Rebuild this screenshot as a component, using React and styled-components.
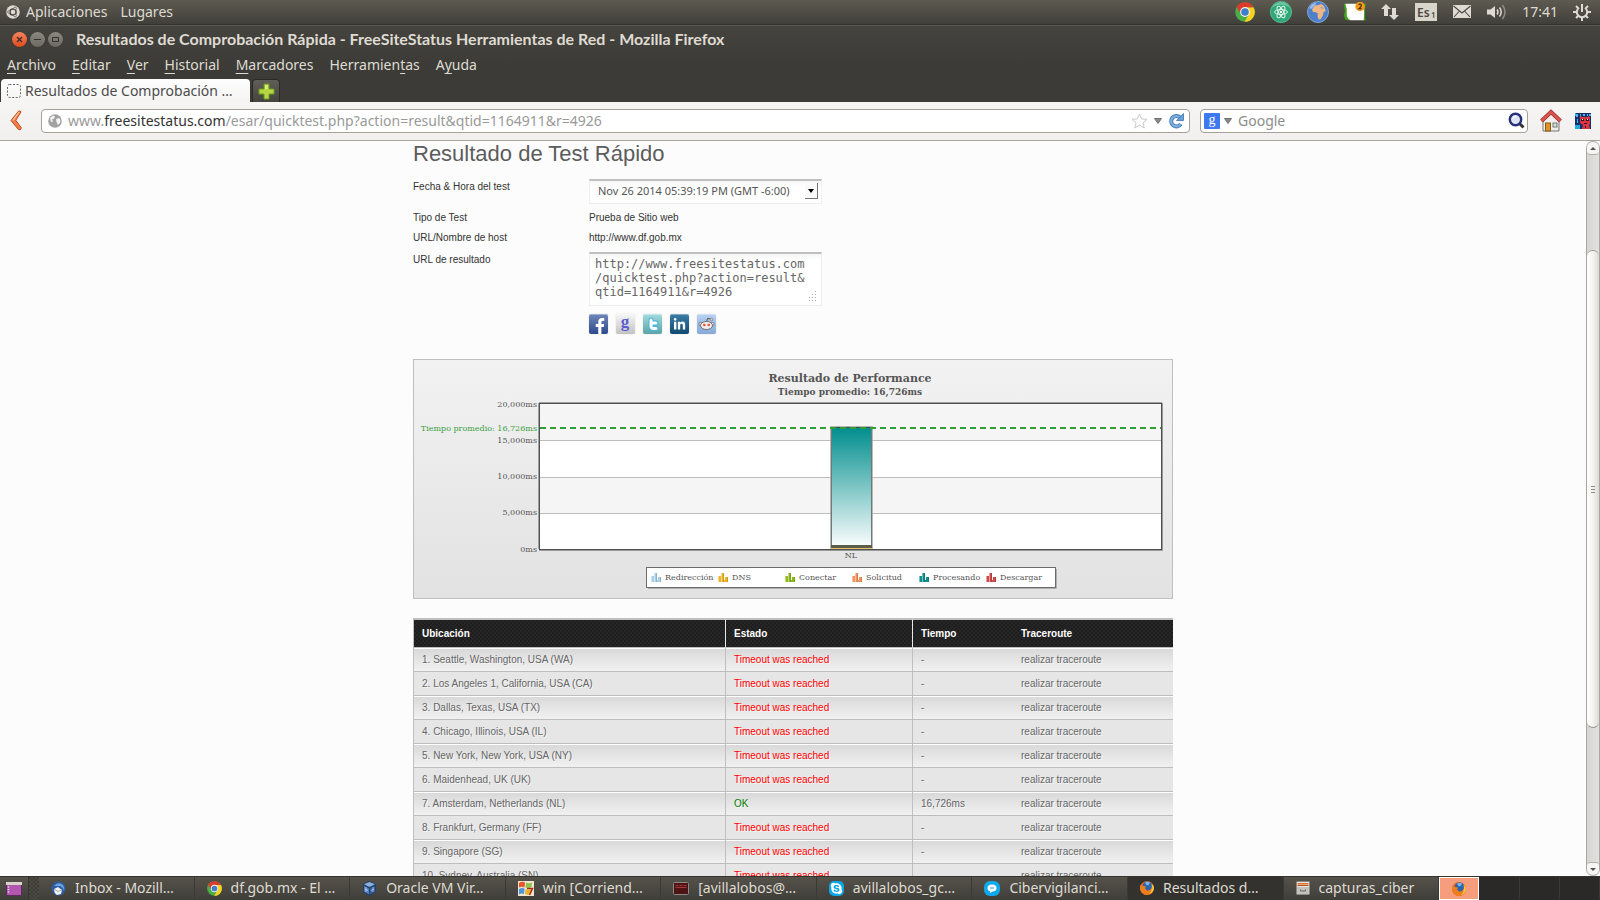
import React from "react";
import styled, { createGlobalStyle, css } from "styled-components";
import { FaFacebookF, FaLinkedinIn, FaSkype } from "react-icons/fa";

const UI = `"Noto Sans", "Open Sans", sans-serif`;
const BODY = `"Liberation Sans", Arial, sans-serif`;

const Global = createGlobalStyle`
  *, *::before, *::after { box-sizing: border-box; }
  body { margin: 0; background: #fcfcfc; font-family: ${BODY}; }
  button, input, select, textarea { font: inherit; color: inherit; margin: 0; }
  button { border: 0; padding: 0; background: none; cursor: pointer; }
  svg { display: block; flex: none; }
`;

const Desktop = styled.div`
  height: 100vh;
  display: flex;
  flex-direction: column;
  overflow: hidden;
`;

/* ---------- top panel ---------- */

const Panel = styled.header`
  height: 25px;
  flex: none;
  display: flex;
  align-items: center;
  justify-content: space-between;
  padding: 0 9px 1px 6px;
  background: linear-gradient(#5d5a51, #413f3a);
  border-bottom: 1px solid #343330;
  color: #dfdbd2;
  font: 14px/20px ${UI};
`;
const PanelGroup = styled.div`
  display: flex;
  align-items: center;
  gap: ${(p) => p.$gap}px;
`;
const PanelButton = styled.button`
  display: flex;
  align-items: center;
  gap: 6px;
`;

/* ---------- browser chrome ---------- */

const Chrome = styled.div`
  flex: none;
  background: linear-gradient(#45433e, #3c3b37 40px);
  border-top: 1px solid #5a5852;
  color: #dfdbd2;
  font: 14px/20px ${UI};
`;
const TitleBar = styled.div`
  height: 26px;
  display: flex;
  align-items: center;
  padding-left: 12px;
`;
const WindowButtons = styled.div`
  display: flex;
  gap: 3px;
  margin-right: 13px;
`;
const WindowButton = styled.button`
  width: 15px;
  height: 15px;
  border-radius: 50%;
  display: grid;
  place-items: center;
  background: ${(p) => (p.$close ? "linear-gradient(#f58560, #df4a1b)" : "linear-gradient(#8b887f, #6b6962)")};
  box-shadow: 0 0 1px #22211e;
  color: #33302c;
`;
const Title = styled.h1`
  margin: 0;
  font: bold 16px/20px Lato, ${UI};
`;
const Menu = styled.nav`
  height: 26px;
  display: flex;
  align-items: center;
  gap: 16px;
  padding-left: 7px;
  u { text-underline-offset: 3px; }
`;
const TabStrip = styled.div`
  height: 24px;
  display: flex;
  align-items: flex-end;
  gap: 2px;
  padding-left: 1px;
`;
const Tab = styled.button`
  width: 249px;
  height: 23px;
  display: flex;
  align-items: center;
  gap: 4px;
  padding-left: 6px;
  border-radius: 4px 4px 0 0;
  background: linear-gradient(#fdfdfd, #f5f4f3);
  color: #4c4c4c;
  white-space: nowrap;
`;
const NewTab = styled.button`
  width: 28px;
  height: 23px;
  display: grid;
  place-items: center;
  border: 1px solid #2b2a27;
  border-bottom: 0;
  border-radius: 4px 4px 0 0;
  background: linear-gradient(#605e57, #45433e);
`;

const NavBar = styled.div`
  flex: none;
  height: 39px;
  display: flex;
  align-items: center;
  padding: 0 9px 1px 10px;
  background: linear-gradient(#f6f5f4, #f1f0ef);
  border-bottom: 1px solid #aaa69d;
  color: #8c8c8c;
  font: 14px/20px ${UI};
`;
const Field = styled.div`
  height: 24px;
  display: flex;
  align-items: center;
  gap: 6px;
  border: 1px solid #a5a198;
  border-radius: 4px;
  background: #fff;
`;
const Address = styled(Field)`
  flex: 1;
  margin: 0 10px 0 19px;
  padding: 0 5px 0 6px;
`;
const AddressText = styled.div`
  flex: 1;
  white-space: nowrap;
  overflow: hidden;
  color: #999;
  b { font-weight: 400; color: #333; }
`;
const Search = styled(Field)`
  width: 328px;
  gap: 4px;
  padding: 0 2px 0 3px;
  margin-right: 12px;
`;
const SearchInput = styled.input`
  flex: 1;
  min-width: 0;
  border: 0;
  outline: 0;
  padding: 0 0 0 2px;
  background: none;
  &::placeholder { color: #8c8c8c; opacity: 1; }
`;
const Extras = styled.div`
  display: flex;
  align-items: center;
  gap: 13px;
`;

/* ---------- page ---------- */

const Viewport = styled.div`
  flex: 1;
  min-height: 0;
  display: flex;
`;
const Page = styled.main`
  flex: 1;
  min-width: 0;
  overflow: hidden;
  background: #fcfcfc;
`;
const Content = styled.div`
  max-width: 760px;
  margin: 0 auto;
`;
const Heading = styled.h2`
  margin: 0 0 12px;
  color: #5c5c5c;
  font: 22px/26px ${BODY};
`;
const Form = styled.form`
  display: grid;
  row-gap: 8px;
  color: #333;
  font: 10px/12px ${BODY};
`;
const FormRow = styled.div`
  display: grid;
  grid-template-columns: 176px 233px;
  align-items: start;
`;
const FormLabel = styled.label`
  padding-top: ${(p) => (p.$control ? 2 : 0)}px;
`;
const controlBox = css`
  display: block;
  width: 100%;
  border: 1px solid #eee;
  border-top: 2px solid #bfbfbf;
  border-radius: 0;
  background: linear-gradient(#f6f6f6, #fff 6px);
`;
const SelectWrap = styled.div`
  position: relative;
`;
const Select = styled.select`
  ${controlBox}
  appearance: none;
  height: 25px;
  padding: 0 24px 2px 8px;
  color: #555;
  font: 11px/16px ${UI};
`;
const SelectArrow = styled.span`
  position: absolute;
  right: 4px;
  top: 4px;
  width: 13px;
  height: 16px;
  display: grid;
  place-items: center;
  border-right: 1px solid #777;
  border-bottom: 1px solid #777;
  background: #fafafa;
  pointer-events: none;
`;
const Area = styled.textarea`
  ${controlBox}
  height: 54px;
  padding: 3px 5px;
  resize: none;
  overflow: hidden;
  color: #666;
  font: 12px/14px "DejaVu Sans Mono", monospace;
`;
const Grip = styled.svg`
  position: absolute;
  right: 5px;
  bottom: 5px;
`;
const Social = styled.div`
  grid-column: 2;
  display: flex;
  gap: 8px;
`;
const SocialLink = styled.a`
  width: 19px;
  height: 20px;
  display: grid;
  place-items: ${(p) => p.$place || "center"};
  border-radius: 2px;
  background: linear-gradient(${(p) => p.$from}, ${(p) => p.$to});
  box-shadow: inset 0 1px 0 rgba(255, 255, 255, 0.35), 0 0 1px rgba(0, 0, 0, 0.35);
  color: #fff;
  text-decoration: none;
`;

const ChartCard = styled.figure`
  margin: 25px 0 19px;
  height: 240px;
  border: 1px solid #bfbfbf;
  background: linear-gradient(#f2f2f2, #e2e2e2);
`;
const ChartSvg = styled.svg`
  width: 100%;
  height: 100%;
`;
const ChartText = styled.text`
  font: ${(p) => (p.$bold ? 700 : 400)} ${(p) => p.$size || 8}px "DejaVu Serif", serif;
  fill: ${(p) => p.$ink || "#555"};
`;

const Table = styled.table`
  width: 100%;
  table-layout: fixed;
  border-spacing: 0;
  border-left: 1px solid #bfbfbf;
  font: 10px/14px ${BODY};
  color: #666;
`;
const Col = styled.col`
  width: ${(p) => (p.$w ? `${p.$w}px` : "auto")};
`;
const HeadCell = styled.th`
  height: 30px;
  padding: 0 8px;
  text-align: left;
  color: #fff;
  border-top: 2px solid #bfbfbf;
  border-bottom: 1px solid #bfbfbf;
  border-right: ${(p) => (p.$rule ? "1px solid #e8e8e8" : "0")};
  background: repeating-conic-gradient(#1e1e1e 0 25%, #262626 0 50%) 0 0 / 4px 4px;
`;
const Row = styled.tr`
  background: ${(p) => (p.$odd ? "linear-gradient(#fff 1px, #d9d9d9 1px, #f2f2f2)" : "#e6e6e6")};
`;
const Cell = styled.td`
  height: 24px;
  padding: 0 8px;
  border-bottom: 1px solid #bdbdbd;
  border-right: ${(p) => (p.$rule ? "1px solid #bfbfbf" : "0")};
  color: ${(p) => p.$ink || "inherit"};
  text-shadow: 1px 1px 0 rgba(255, 255, 255, 0.6);
  white-space: nowrap;
`;
const TraceLink = styled.a`
  color: inherit;
  text-decoration: none;
`;

/* ---------- scrollbar ---------- */

const Scrollbar = styled.div`
  width: 14px;
  flex: none;
  display: flex;
  flex-direction: column;
  border: 1px solid #a9a7a2;
  border-top: 0;
  border-bottom: 0;
  border-radius: 7px;
  background: linear-gradient(90deg, #d6d5d2, #e2e1df);
`;
const ScrollButton = styled.button`
  height: 14px;
  flex: none;
  display: grid;
  place-items: center;
  border: 1px solid #b0aea9;
  border-width: 1px 0;
  border-radius: ${(p) => (p.$end ? "4px 4px 7px 7px" : "7px 7px 4px 4px")};
  background: #f6f5f4;
`;
const Track = styled.div`
  flex: 1;
  display: grid;
  grid-template-rows: 95fr 480fr 134fr;
`;
const Thumb = styled.div`
  grid-row: 2;
  display: grid;
  place-items: center;
  border: 1px solid #98958f;
  border-width: 1px 0;
  border-radius: 6px;
  background: linear-gradient(90deg, #fff, #f4f3f1 50%, #dcdad6);
`;

/* ---------- bottom task bar ---------- */

const TaskBar = styled.footer`
  flex: none;
  height: 24px;
  display: flex;
  background: linear-gradient(#55524a, #403e39);
  border-top: 1px solid #34332f;
  color: #dfdbd2;
  font: 14px/20px ${UI};
`;
const ShowDesktop = styled.button`
  width: 29px;
  display: grid;
  place-items: center;
  border-right: 1px solid #36352f;
`;
const Handle = styled.div`
  width: 10px;
  background: repeating-conic-gradient(#4b4942 0 25%, #3f3d38 0 50%) 0 0 / 4px 4px;
`;
const Tasks = styled.div`
  flex: 1;
  min-width: 0;
  display: flex;
`;
const Task = styled.button`
  flex: 1 1 0;
  min-width: 0;
  display: flex;
  align-items: center;
  gap: 9px;
  padding: 0 0 1px 12px;
  border-right: 1px solid #3b3934;
  background: ${(p) => (p.$active ? "#33322e" : "none")};
  white-space: nowrap;
`;
const Workspaces = styled.div`
  width: 161px;
  display: grid;
  grid-template-columns: repeat(4, 1fr);
  background: #2a2927;
`;
const Workspace = styled.button`
  display: grid;
  place-items: center;
  border: 1px solid ${(p) => (p.$active ? "#fff" : "transparent")};
  border-right-color: ${(p) => (p.$active ? "#fff" : "#3a3936")};
  background: ${(p) => (p.$active ? "#f59d7c" : "none")};
`;

/* ---------- icons ---------- */

const UbuntuIcon = () => (
  <svg width="14" height="14" viewBox="0 0 14 14">
    <circle cx="7" cy="7" r="6.8" fill="#dfdbd2" />
    <circle cx="7" cy="7" r="3.1" fill="none" stroke="#4b4943" strokeWidth="1.5" />
    <g fill="#dfdbd2" stroke="#4b4943" strokeWidth=".7">
      <circle cx="2.9" cy="7" r="1.3" />
      <circle cx="9.1" cy="3.4" r="1.3" />
      <circle cx="9.1" cy="10.6" r="1.3" />
    </g>
  </svg>
);
const ChromeIcon = ({ size }) => (
  <svg width={size} height={size} viewBox="0 0 20 20">
    <circle cx="10" cy="10" r="9.8" fill="#4aae48" />
    <path d="M1.5 5.1A9.8 9.8 0 0 1 18.6 5.4H10L6.1 12.2z" fill="#dc3a2b" />
    <path d="M18.6 5.4A9.8 9.8 0 0 1 9.6 19.8L14 12.2 14 7.8 10 5.4z" fill="#fcd01e" />
    <circle cx="10" cy="10" r="4.9" fill="#f4f4f0" />
    <circle cx="10" cy="10" r="3.8" fill="#3f7fc9" />
  </svg>
);
const AtomIcon = () => (
  <svg width="22" height="22" viewBox="0 0 22 22">
    <circle cx="11" cy="11" r="10.6" fill="#2fa877" stroke="#62c49c" strokeWidth=".8" />
    <path d="M2 7a10 10 0 0 1 18 0 14 14 0 0 0-18 0z" fill="#8cd4b5" opacity=".7" />
    <g fill="none" stroke="#e4f5ec" strokeWidth="1">
      <ellipse cx="11" cy="11" rx="6.4" ry="2.5" />
      <ellipse cx="11" cy="11" rx="6.4" ry="2.5" transform="rotate(60 11 11)" />
      <ellipse cx="11" cy="11" rx="6.4" ry="2.5" transform="rotate(120 11 11)" />
    </g>
    <circle cx="11" cy="11" r="1.3" fill="#e4f5ec" />
  </svg>
);
const EarthIcon = () => (
  <svg width="22" height="22" viewBox="0 0 22 22">
    <circle cx="11" cy="11" r="10.5" fill="#4d7fcb" stroke="#85a6d8" />
    <path d="M2.5 7a9.6 9.6 0 0 1 7-5.400L8 4.500 4 8z" fill="#9dbce8" />
    <path d="M6 7 8 4.500l3.500-.5 2.500-1 3 2 1 3 .8 2-2.300 1.200-.6 3.400-2.400 3.600-2 .4-1-3.600.4-2.400-2.200-1.400-2.700-.2-1-2.400z" fill="#f0b783" />
    <path d="M12.500 5.500l4 1.500-1.500 1z" fill="#7b9bc9" />
  </svg>
);
const NotifyIcon = () => (
  <svg width="22" height="20" viewBox="0 0 24 20">
    <path d="M0 1h3l1 12 3 6H4l-3-1-1-5 1-3zM24 1h-3v12l-2 6h5l-1-2V5z" fill="#43a51c" />
    <path d="M1.500 1h20q.5 3 0 6l.500 3-.5 9H7q-4-2-4-7 .5-6-1.500-11z" fill="#fff" />
    <circle cx="17.500" cy="4" r="5.200" fill="#f79a10" />
    <path d="M16 2.200q1.500-1.600 2.800-.3 1 1.400-2.700 4.600h3.200" fill="none" stroke="#222" strokeWidth="1.200" />
  </svg>
);
const NetworkIcon = () => (
  <svg width="19" height="16" viewBox="0 0 19 16" fill="#dfdbd2">
    <path d="M5 0l5 5H7v7H3V5H0z" />
    <path d="M13 16l5-5h-3V4h-4v7H8z" />
  </svg>
);
const KeyboardIcon = () => (
  <svg width="22" height="18" viewBox="0 0 22 18">
    <rect width="22" height="18" fill="#d9d5cb" />
    <text x="2" y="14" fontFamily="Noto Sans, sans-serif" fontWeight="600" fontSize="12" fill="#4a4843">Es</text>
    <text x="16" y="15" fontFamily="Noto Sans, sans-serif" fontWeight="600" fontSize="8" fill="#4a4843">1</text>
  </svg>
);
const MailIcon = () => (
  <svg width="20" height="13" viewBox="-1 0 20 13">
    <rect width="18" height="13" fill="#dfdbd2" />
    <path d="M.5 1 9 8l8.500-7M1 12l5.500-6M17 12l-5.500-6" fill="none" stroke="#4a4843" strokeWidth="1.100" />
  </svg>
);
const VolumeIcon = () => (
  <svg width="20" height="16" viewBox="0 0 20 16">
    <path d="M0 5.500h3.500L8 2v12l-4.500-3.500H0z" fill="#dfdbd2" />
    <g fill="none" strokeWidth="1.500" stroke="#dfdbd2">
      <path d="M10 5.500q2 2.500 0 5" />
      <path d="M12.500 3.500q3.500 4.500 0 9" />
      <path d="M15.500 1q5 7 0 14" stroke="#8f8c84" />
    </g>
  </svg>
);
const PowerIcon = () => (
  <svg width="18" height="18" viewBox="0 0 18 18" fill="none" stroke="#dfdbd2" strokeWidth="2">
    <path d="M6 4.800A5.200 5.200 0 1 0 12 4.800M9 1v8" />
    <path d="M3 3l2 2M15 3l-2 2M0 9h4M18 9h-4M3 15l2-2M15 15l-2-2M9 18v-3" />
  </svg>
);
const PlusIcon = () => (
  <svg width="17" height="17" viewBox="0 0 17 17">
    <path d="M6 1h5v5h5v5h-5v5H6v-5H1V6h5z" fill="#b5d642" stroke="#6a9a20" />
    <path d="M7 2h3v4H7z" fill="#d8ec7c" />
  </svg>
);
const BackIcon = () => (
  <svg width="12" height="21" viewBox="0 0 12 21">
    <path d="M8.500 1.200Q10.500.3 11 2L5.800 10.300 11.300 17.800Q11 20.500 8.500 19.600L1 10.500z" fill="#ef8048" stroke="#c04a1c" />
    <path d="M9 2 3 10.400" stroke="#fbc79c" strokeWidth="1.200" />
  </svg>
);
const GlobeIcon = () => (
  <svg width="14" height="14" viewBox="0 0 14 14">
    <circle cx="7" cy="7" r="6.800" fill="#a2a2a2" />
    <path d="M2 4l3-2.500 2 1-1 2-2 1 1 2-2 .5zM8 5l3-1 1.500 2-.5 3-2 2-1.500-3z" fill="#f3f3f3" />
  </svg>
);
const StarIcon = () => (
  <svg width="17" height="16" viewBox="0 0 17 16">
    <path d="M8.500 1l2.200 5 5.300.3-4.100 3.500 1.400 5.200-4.800-2.900L3.700 15l1.400-5.200L1 6.300 6.300 6z" fill="#fff" stroke="#c9c9c9" />
  </svg>
);
const Caret = () => (
  <svg width="8" height="6" viewBox="0 0 8 6">
    <path d="M.5.500h7L4 5.500z" fill="#8a8a8a" stroke="#6f6f6f" />
  </svg>
);
const ReloadIcon = () => (
  <svg width="16" height="16" viewBox="0 0 16 16">
    <path d="M12 4.500A5.200 5.200 0 1 0 12.800 11" fill="none" stroke="#3d77b4" strokeWidth="4" />
    <path d="M12 4.500A5.200 5.200 0 1 0 12.800 11" fill="none" stroke="#7fb0de" strokeWidth="2.200" />
    <path d="M15.500.500v7H8.500z" fill="#6aa0d4" stroke="#3d77b4" strokeWidth=".8" />
  </svg>
);
const GoogleIcon = () => (
  <svg width="16" height="16" viewBox="0 0 16 16">
    <rect width="16" height="16" rx="1" fill="#3f79f0" />
    <text x="8" y="11" textAnchor="middle" fontFamily="Liberation Serif, serif" fontSize="14" fill="#fff">g</text>
  </svg>
);
const LensIcon = () => (
  <svg width="17" height="17" viewBox="0 0 17 17">
    <path d="M11 11l4.500 4.500" stroke="#333" strokeWidth="3" />
    <circle cx="7.500" cy="7.500" r="5.700" fill="#dfe4f5" stroke="#26307c" strokeWidth="2.400" />
    <path d="M5 6.500q1-2.500 3-2.500" stroke="#fff" strokeWidth="1.500" fill="none" />
  </svg>
);
const HomeIcon = () => (
  <svg width="22" height="23" viewBox="0 0 22 23">
    <path d="M3 10l8-7 8 7v12H3z" fill="#efeeea" stroke="#777" />
    <rect x="5.500" y="14" width="5" height="8" fill="#d9952c" stroke="#8a5a10" />
    <rect x="13" y="14" width="4" height="4" fill="#cfe0d8" stroke="#777" />
    <path d="M1.500 12 11 3l9.500 9" fill="none" stroke="#a82c2c" strokeWidth="4" />
    <path d="M1.500 12 11 3l9.500 9" fill="none" stroke="#d8544f" strokeWidth="2.600" />
  </svg>
);
const CatIcon = () => (
  <svg width="16" height="16" viewBox="0 0 16 16">
    <rect width="16" height="16" fill="#14306b" />
    <path d="M0 12h5v4H0zM0 0h1v3H0z" fill="#26a8e0" />
    <path d="M1 1h2v3H1zM5 1h1v3H5zM8 1h2v2H8zM12 1h1v2h-1zM2 6h1v4H2zM14 1h2v2h-2z" fill="#4fb4e8" />
    <path d="M5 3l2 1h5l2-1 1 2v6l-1 1 1 4H7l1-4-3-2z" fill="#dc3340" />
    <path d="M6 6h3v2H6zM11 6h3v2h-3zM9 10h3v1H9zM10 13h1v2h-1z" fill="#2b1730" />
    <path d="M7 6h1v1H7zM12 6h1v1h-1z" fill="#fff" />
  </svg>
);
const FirefoxIcon = () => (
  <svg width="14" height="14" viewBox="0 0 14 14">
    <circle cx="7" cy="7" r="6.900" fill="#e2621b" />
    <circle cx="7.500" cy="5.500" r="4.900" fill="#2d64ad" />
    <path d="M5 2q2-2 5-.5l-1 2-2 1z" fill="#7db7e8" />
    <path d="M1 3.500 3 5l3 .5-1 2 2 2q3 .5 4.500-2.500Q13 4 11.500 2.500 14.500 5 13.500 9T8 13.800 1 10.500 1 3.500z" fill="#ef7d1e" />
    <path d="M11.500 2.500Q14.500 5 13.500 9 12 12.500 9 13q4-3 2.500-10.500z" fill="#fbc93a" />
  </svg>
);
const ThunderbirdIcon = () => (
  <svg width="15" height="15" viewBox="0 0 15 15">
    <circle cx="7.500" cy="7.500" r="7" fill="#2a5da6" />
    <path d="M3 5q4-5 9-1 2 3 1 6-1-4-4-5z" fill="#6fa3dc" />
    <path d="M3 8l4-2 4 3-1 4-4 1q-3-2-3-6z" fill="#f1f1ee" />
    <path d="M3 8l4 2.500L11 9" fill="none" stroke="#8b8b8b" strokeWidth=".7" />
  </svg>
);
const VBoxIcon = () => (
  <svg width="15" height="15" viewBox="0 0 15 15">
    <path d="M7.500 0 14 3v8l-6.500 4L1 11V3z" fill="#23416f" />
    <path d="M7.500 1 13 3.300 7.500 6 2 3.300z" fill="#8fb0d8" />
    <path d="M2 5l5 2.500v6L2 10.500z" fill="#557fb8" />
    <path d="M13 5l-5 2.500v6l5-3z" fill="#3a6199" />
    <path d="M3 8l3 1.500M9 9.500 12 8M4 6v5M11 6v5" stroke="#cfdff2" strokeWidth=".7" />
  </svg>
);
const WinIcon = () => (
  <svg width="16" height="15" viewBox="0 0 16 15">
    <rect width="16" height="15" fill="#f2e4cf" />
    <path d="M1 2q3-2 6-.5L6.500 6.500Q3.500 5 1 6.500z" fill="#e8532a" />
    <path d="M8 1.500q3 1.500 6 0L13.500 6q-3 1.500-6 .5z" fill="#8fc24a" />
    <path d="M1 8q3-1.500 5.500-.5L6 13q-2.500-1-5 .5z" fill="#4b95dc" />
    <path d="M7.500 8q3 1.500 6 0L13 13q-3 1.500-6 0z" fill="#e9b32c" />
    <path d="M9 7.500h5.500L11.500 14" fill="none" stroke="#b02a1a" strokeWidth="1.500" />
  </svg>
);
const TerminalIcon = () => (
  <svg width="16" height="13" viewBox="0 0 16 13">
    <rect x=".5" y=".5" width="15" height="12" rx="1" fill="#4d1315" stroke="#8c8983" />
    <path d="M2.500 3.500h3M6.500 3.500h3M10.500 3.500h3M2.500 5.500h11" stroke="#a33b3b" />
  </svg>
);
const RoundIcon = styled.span`
  width: 15px;
  height: 15px;
  flex: none;
  display: grid;
  place-items: center;
  border-radius: 5px;
  background: #0aa7e8;
  color: #fff;
`;
const ChatIcon = () => (
  <svg width="16" height="15" viewBox="0 0 16 15">
    <rect width="16" height="15" rx="6" fill="#0fa8ea" />
    <ellipse cx="8" cy="7" rx="4.500" ry="3.500" fill="#fff" />
    <path d="M6 9v3l3-2z" fill="#fff" />
    <path d="M6 7h4" stroke="#0fa8ea" />
  </svg>
);
const DrawerIcon = () => (
  <svg width="14" height="14" viewBox="0 0 14 14">
    <rect x=".5" y=".5" width="13" height="13" rx="1" fill="#e6e4df" stroke="#8b8983" />
    <path d="M1.500 2h11v1.500h-11z" fill="#e2712f" />
    <path d="M1.500 4.500h11" stroke="#b94d18" />
    <path d="M1 6h12v7H1z" fill="#c3c1bb" />
    <path d="M4.500 8.500V10h5V8.500" fill="none" stroke="#66645f" />
  </svg>
);
const DesktopIcon = () => (
  <svg width="16" height="14" viewBox="0 0 16 14">
    <rect x=".5" y=".5" width="15" height="13" fill="#b157b0" stroke="#5b2b5b" />
    <path d="M0 0h16v3H0z" fill="#d8d4c9" />
    <path d="M2.500 4.500v1M2.500 7v1M2.500 9.500v1" stroke="#fff" strokeWidth="1.500" />
  </svg>
);
const ScrollArrow = ({ up }) => (
  <svg width="6" height="3" viewBox="0 0 6 3">
    <path d={up ? "M0 3h6L3 0z" : "M0 0h6L3 3z"} fill="#55534e" />
  </svg>
);

/* ---------- data ---------- */

const menus = [
  ["", "A", "rchivo"],
  ["", "E", "ditar"],
  ["", "V", "er"],
  ["", "H", "istorial"],
  ["", "M", "arcadores"],
  ["Herramien", "t", "as"],
  ["A", "y", "uda"],
];

const rows = [
  ["Seattle, Washington, USA (WA)"],
  ["Los Angeles 1, California, USA (CA)"],
  ["Dallas, Texas, USA (TX)"],
  ["Chicago, Illinois, USA (IL)"],
  ["New York, New York, USA (NY)"],
  ["Maidenhead, UK (UK)"],
  ["Amsterdam, Netherlands (NL)", "16,726ms"],
  ["Frankfurt, Germany (FF)"],
  ["Singapore (SG)"],
  ["Sydney, Australia (SN)"],
];

const tasks = [
  [<ThunderbirdIcon />, "Inbox - Mozill…"],
  [<ChromeIcon size={15} />, "df.gob.mx - El …"],
  [<VBoxIcon />, "Oracle VM Vir…"],
  [<WinIcon />, "win [Corriend…"],
  [<TerminalIcon />, "[avillalobos@…"],
  [<RoundIcon><FaSkype size={13} /></RoundIcon>, "avillalobos_gc…"],
  [<ChatIcon />, "Cibervigilanci…"],
  [<FirefoxIcon />, "Resultados d…"],
  [<DrawerIcon />, "capturas_ciber"],
];

const legend = [
  ["Redirección", "#a9cfe9"],
  ["DNS", "#efb428"],
  ["Conectar", "#8fba1c"],
  ["Solicitud", "#f2935a"],
  ["Procesando", "#0f8f8d"],
  ["Descargar", "#d2494c"],
];

const axis = [
  ["20,000ms", 47],
  ["15,000ms", 83],
  ["10,000ms", 119],
  ["5,000ms", 155],
  ["0ms", 192],
];

function PerformanceChart() {
  return (
    <ChartSvg viewBox="0 0 758 238" role="img" aria-label="Resultado de Performance">
      <defs>
        <linearGradient id="bar" x1="0" y1="0" x2="0" y2="1">
          <stop offset="0" stopColor="#008e8d" />
          <stop offset="1" stopColor="#fff" />
        </linearGradient>
      </defs>
      <ChartText x="436" y="22" textAnchor="middle" $size={11} $bold>Resultado de Performance</ChartText>
      <ChartText x="436" y="35" textAnchor="middle" $size={9} $bold>Tiempo promedio: 16,726ms</ChartText>

      <rect x="125" y="43" width="622" height="146" fill="#fff" />
      <path d="M125 43h622v37H125zM125 117h622v36H125z" fill="#f5f5f5" />
      <path d="M125 80.500h622M125 117.500h622M125 153.500h622" stroke="#bdbdbd" />
      <path d="M748.500 43v147.500H125" fill="none" stroke="#999" />
      <rect x="125.500" y="43.500" width="622" height="146" fill="none" stroke="#505050" />
      <path d="M125 42.500h623M124.500 43v146" stroke="#a0a0a0" />

      <rect x="417.500" y="67.500" width="40" height="121" fill="url(#bar)" stroke="#6f7a78" />
      <path d="M416.500 66v123M458.500 66v123M416 66.500h43" stroke="#9d9d9d" opacity=".7" />
      <rect x="417" y="185" width="41" height="3" fill="#5d5c4a" />
      <path d="M417 188.500h41" stroke="#e5c56c" />
      <path d="M417 67.500h41" stroke="#3f4d4a" />
      <path d="M126 68h621" stroke="#2f9e34" strokeWidth="2" strokeDasharray="6 4" />

      {axis.map(([label, y]) => (
        <ChartText key={label} x="123" y={y} textAnchor="end">{label}</ChartText>
      ))}
      <ChartText x="123" y="71" textAnchor="end" $ink="#3ba042">Tiempo promedio: 16,726ms</ChartText>
      <ChartText x="437" y="198" textAnchor="middle">NL</ChartText>

      <path d="M234 228.500h408.500V209" fill="none" stroke="#b0b0b0" />
      <rect x="232.500" y="207.500" width="409" height="20" fill="#fff" stroke="#6c6c6c" />
      {legend.map(([label, color], i) => (
        <g key={label} transform={`translate(${237 + i * 67} 213)`}>
          <path d="M0 3h3v6H0zM3 0h3v9H3zM7 4h3v5H7zM6 7h1v2H6z" fill={color} />
          <path d="M0 3h1v6H0zM3 0h1v9H3z" fill="#fff" opacity=".45" />
          <path d="M5 0h1v9H5zM9 4h1v5H9z" fill="#000" opacity=".15" />
          <ChartText x="14" y="7">{label}</ChartText>
        </g>
      ))}
    </ChartSvg>
  );
}

export default function App() {
  return (
    <Desktop>
      <Global />
      <Panel>
        <PanelGroup $gap={13}>
          <PanelButton><UbuntuIcon />Aplicaciones</PanelButton>
          <PanelButton>Lugares</PanelButton>
        </PanelGroup>
        <PanelGroup $gap={15}>
          <ChromeIcon size={20} />
          <AtomIcon />
          <EarthIcon />
          <NotifyIcon />
          <NetworkIcon />
          <KeyboardIcon />
          <MailIcon />
          <VolumeIcon />
          <span>17:41</span>
          <PowerIcon />
        </PanelGroup>
      </Panel>

      <Chrome>
        <TitleBar>
          <WindowButtons>
            <WindowButton $close aria-label="Cerrar">
              <svg width="7" height="7" viewBox="0 0 7 7"><path d="M1 1l5 5M6 1 1 6" stroke="currentColor" strokeWidth="1.300" /></svg>
            </WindowButton>
            <WindowButton aria-label="Minimizar">
              <svg width="7" height="7" viewBox="0 0 7 7"><path d="M0 3.500h7" stroke="currentColor" /></svg>
            </WindowButton>
            <WindowButton aria-label="Maximizar">
              <svg width="7" height="7" viewBox="0 0 7 7"><path d="M.5 1.500h6v4h-6z" fill="none" stroke="currentColor" /></svg>
            </WindowButton>
          </WindowButtons>
          <Title>Resultados de Comprobación Rápida - FreeSiteStatus Herramientas de Red - Mozilla Firefox</Title>
        </TitleBar>
        <Menu>
          {menus.map(([a, u, b]) => (
            <button key={a + u + b}>{a}<u>{u}</u>{b}</button>
          ))}
        </Menu>
        <TabStrip>
          <Tab>
            <svg width="14" height="14" viewBox="0 0 14 14"><rect x=".5" y=".5" width="13" height="13" rx="2" fill="none" stroke="#666" strokeDasharray="2 1.500" /></svg>
            Resultados de Comprobación …
          </Tab>
          <NewTab aria-label="Nueva pestaña"><PlusIcon /></NewTab>
        </TabStrip>
      </Chrome>

      <NavBar>
        <button aria-label="Atrás"><BackIcon /></button>
        <Address>
          <GlobeIcon />
          <AddressText>www.<b>freesitestatus.com</b>/esar/quicktest.php?action=result&amp;qtid=1164911&amp;r=4926</AddressText>
          <StarIcon />
          <Caret />
          <button aria-label="Recargar"><ReloadIcon /></button>
        </Address>
        <Search>
          <GoogleIcon />
          <Caret />
          <SearchInput placeholder="Google" aria-label="Buscar" />
          <button aria-label="Buscar en Google"><LensIcon /></button>
        </Search>
        <Extras>
          <button aria-label="Inicio"><HomeIcon /></button>
          <button aria-label="Complemento"><CatIcon /></button>
        </Extras>
      </NavBar>

      <Viewport>
        <Page>
          <Content>
            <Heading>Resultado de Test Rápido</Heading>
            <Form>
              <FormRow>
                <FormLabel $control htmlFor="fecha">Fecha &amp; Hora del test</FormLabel>
                <SelectWrap>
                  <Select id="fecha"><option>Nov 26 2014 05:39:19 PM (GMT -6:00)</option></Select>
                  <SelectArrow>
                    <svg width="6" height="4" viewBox="0 0 6 4"><path d="M0 0h6L3 4z" fill="#000" /></svg>
                  </SelectArrow>
                </SelectWrap>
              </FormRow>
              <FormRow><span>Tipo de Test</span><span>Prueba de Sitio web</span></FormRow>
              <FormRow><span>URL/Nombre de host</span><span>http://www.df.gob.mx</span></FormRow>
              <FormRow>
                <FormLabel $control htmlFor="url">URL de resultado</FormLabel>
                <SelectWrap>
                  <Area
                    id="url"
                    readOnly
                    value={"http://www.freesitestatus.com\n/quicktest.php?action=result&\nqtid=1164911&r=4926"}
                  />
                  <Grip width="10" height="10" viewBox="0 0 10 10" fill="#aaa">
                    <path d="M8 0h1v1H8zM8 3h1v1H8zM5 3h1v1H5zM8 6h1v1H8zM5 6h1v1H5zM2 6h1v1H2zM8 9h1v1H8zM5 9h1v1H5zM2 9h1v1H2z" />
                  </Grip>
                </SelectWrap>
              </FormRow>
              <FormRow>
                <Social>
                  <SocialLink href="#facebook" aria-label="Facebook" $from="#6f86b9" $to="#2f4a8e" $place="end end"><FaFacebookF size={16} /></SocialLink>
                  <SocialLink href="#google" aria-label="Google" $from="#f7f7f7" $to="#c2c2c2">
                    <svg width="15" height="20" viewBox="0 0 15 20"><text x="7" y="13" textAnchor="middle" fontFamily="Liberation Serif, serif" fontWeight="bold" fontSize="17" fill="#5a5ccf">g</text></svg>
                  </SocialLink>
                  <SocialLink href="#twitter" aria-label="Twitter" $from="#a4dbe0" $to="#5aa4a8">
                    <svg width="12" height="14" viewBox="0 0 12 14"><path d="M4 3v6q0 2.500 2.500 2.500H9M4 6h5" fill="none" stroke="#45b4dc" strokeWidth="5" strokeLinecap="round" /><path d="M4 3v6q0 2.500 2.500 2.500H9M4 6h5" fill="none" stroke="#fff" strokeWidth="3" strokeLinecap="round" /></svg>
                  </SocialLink>
                  <SocialLink href="#linkedin" aria-label="LinkedIn" $from="#3c7da6" $to="#0e4a72"><FaLinkedinIn size={13} /></SocialLink>
                  <SocialLink href="#reddit" aria-label="Reddit" $from="#b9d3f3" $to="#84a9d6">
                    <svg width="17" height="14" viewBox="0 0 17 14"><path d="M8.500 5 9.500 1.500 13 2" fill="none" stroke="#555" /><circle cx="13.500" cy="2.500" r="1.300" fill="#ddd" stroke="#666" strokeWidth=".6" /><circle cx="2.500" cy="7" r="1.700" fill="#ddd" stroke="#666" strokeWidth=".7" /><circle cx="14.500" cy="7" r="1.700" fill="#ddd" stroke="#666" strokeWidth=".7" /><ellipse cx="8.500" cy="8.500" rx="6" ry="4" fill="#eee" stroke="#555" strokeWidth=".8" /><circle cx="6.300" cy="8" r="1.300" fill="#f0502a" /><circle cx="10.700" cy="8" r="1.300" fill="#f0502a" /></svg>
                  </SocialLink>
                </Social>
              </FormRow>
            </Form>

            <ChartCard><PerformanceChart /></ChartCard>

            <Table>
              <colgroup><Col $w={312} /><Col $w={187} /><Col $w={100} /><Col /></colgroup>
              <thead>
                <tr>
                  <HeadCell $rule>Ubicación</HeadCell>
                  <HeadCell $rule>Estado</HeadCell>
                  <HeadCell>Tiempo</HeadCell>
                  <HeadCell>Traceroute</HeadCell>
                </tr>
              </thead>
              <tbody>
                {rows.map(([place, time], i) => (
                  <Row key={place} $odd={i % 2 === 0}>
                    <Cell $rule>{i + 1}. {place}</Cell>
                    <Cell $rule $ink={time ? "#008000" : "#f00"}>{time ? "OK" : "Timeout was reached"}</Cell>
                    <Cell>{time || "-"}</Cell>
                    <Cell><TraceLink href="#traceroute">realizar traceroute</TraceLink></Cell>
                  </Row>
                ))}
              </tbody>
            </Table>
          </Content>
        </Page>
        <Scrollbar>
          <ScrollButton aria-label="Subir"><ScrollArrow up /></ScrollButton>
          <Track>
            <Thumb>
              <svg width="4" height="7" viewBox="0 0 4 7"><path d="M0 .5h4M0 3.500h4M0 6.500h4" stroke="#8c8a85" /></svg>
            </Thumb>
          </Track>
          <ScrollButton $end aria-label="Bajar"><ScrollArrow /></ScrollButton>
        </Scrollbar>
      </Viewport>

      <TaskBar>
        <ShowDesktop aria-label="Mostrar escritorio"><DesktopIcon /></ShowDesktop>
        <Handle />
        <Tasks>
          {tasks.map(([icon, label]) => (
            <Task key={label} $active={label.startsWith("Resultados")}>{icon}{label}</Task>
          ))}
        </Tasks>
        <Workspaces>
          <Workspace $active aria-label="Área de trabajo 1"><FirefoxIcon /></Workspace>
          <Workspace aria-label="Área de trabajo 2" />
          <Workspace aria-label="Área de trabajo 3" />
          <Workspace aria-label="Área de trabajo 4" />
        </Workspaces>
      </TaskBar>
    </Desktop>
  );
}
